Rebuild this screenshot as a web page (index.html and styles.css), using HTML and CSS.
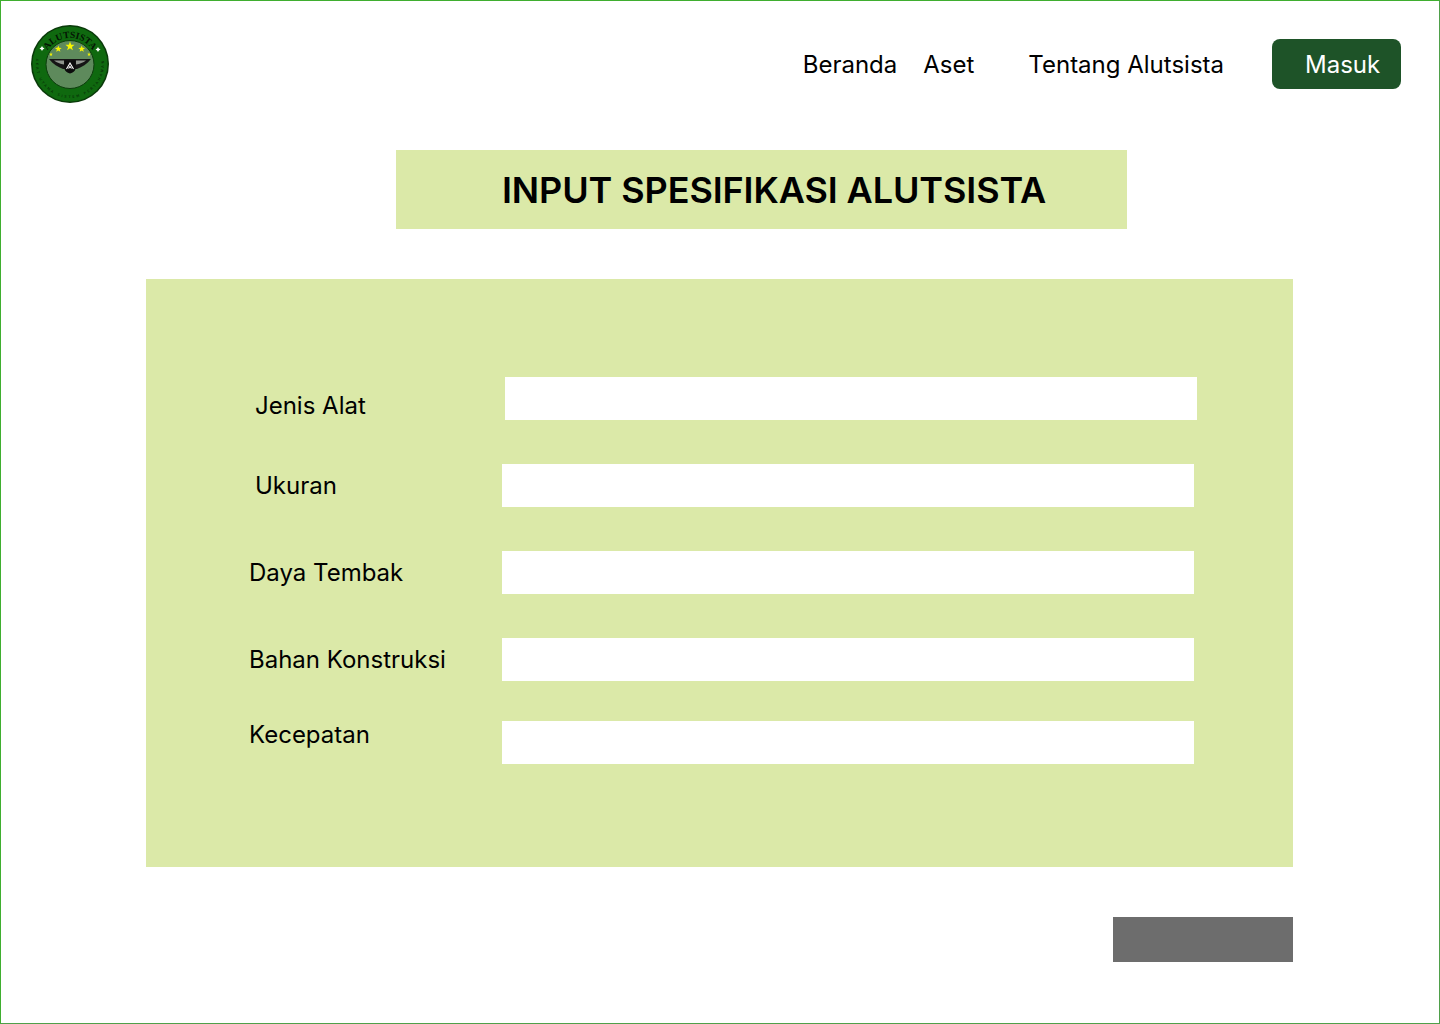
FILE: index.html
```html
<!doctype html>
<html>
    <head>
        <meta charset="utf-8">
        <meta name="viewport" content="width=device-width, initial-scale=1">
        <title>Input Spesifikasi Alutsista</title>
        <link rel="stylesheet" href="styles.css">
    </head>
    <body>
        <div class="page">
            <header class="header">
                <svg class="logo" viewBox="0 0 78 78" width="78" height="78">
                    <defs>
                        <path id="arcTop" d="M12.500 39.500 A26.500 26.500 0 0 1 65.500 39.500"></path>
                        <path id="arcBottom" d="M7 27.500 A34 34 0 1 0 71 27.500"></path>
                    </defs>
                    <circle cx="39" cy="39" r="39" fill="#0a3a0a"></circle>
                    <circle cx="39" cy="39" r="37.500" fill="#0f690f"></circle>
                    <circle cx="39" cy="39.500" r="24" fill="#5e8a5c" stroke="#0d3d0d" stroke-width="1"></circle>
                    <text class="logo-title"><textPath href="#arcTop" startOffset="50%" text-anchor="middle">ALUTSISTA</textPath></text>
                    <text class="logo-small"><textPath href="#arcBottom" startOffset="50%" text-anchor="middle">AKAT UTAMA SISTEM PERTAHANAN</textPath></text>
                    <path fill="#f6f500" d="M39 16.500l1.200 3.200 3.400.1-2.700 2.100 1 3.300-2.900-1.900-2.900 1.900 1-3.300-2.700-2.100 3.400-.1zM27.300 20.500l.9 2.300 2.500.1-2 1.500.7 2.400-2.100-1.400-2.100 1.400.7-2.400-2-1.500 2.500-.1zM50.700 20.500l.9 2.300 2.500.1-2 1.500.7 2.400-2.100-1.400-2.100 1.400.7-2.400-2-1.500 2.500-.1zM20 27.500l.5 1.200 1.300.1-1 .8.4 1.300-1.200-.7-1.200.7.4-1.300-1-.8 1.300-.1zM58 27.500l.5 1.200 1.300.1-1 .8.4 1.300-1.200-.7-1.200.7.4-1.300-1-.8 1.300-.1z"></path>
                    <path fill="#ffffff" d="M11 21l.9 1.600 1.600.9-1.600.9-.9 1.600-.9-1.600-1.600-.9 1.600-.9zM67 22l.9 1.600 1.600.9-1.600.9-.9 1.600-.9-1.600-1.600-.9 1.600-.9z"></path>
                    <path fill="#151515" d="M18 34 L60 34 C56 39 51 42 46 44 L32 44 C27 42 22 39 18 34z"></path>
                    <path fill="#8f958d" d="M23 35.500 L33 35.500 L33 39.500 C29 39 26 37.500 23 35.500zM55 35.500 L45 35.500 L45 39.500 C49 39 52 37.500 55 35.500z"></path>
                    <path fill="#0c0c0c" d="M33.500 35.500 L44.500 35.500 L44.500 44 C44 46 42 47.500 39 48.500 C36 47.500 34 46 33.500 44z"></path>
                    <path fill="none" stroke="#ffffff" stroke-width="1.100" d="M35.500 44 L39 38 L42.500 44 M37.500 43.500 L39 41.500 L40.500 43.500"></path>
                </svg>
                <nav class="nav">
                    <a class="nav-link nav-beranda">Beranda</a>
                    <a class="nav-link nav-aset">Aset</a>
                    <a class="nav-link">Tentang Alutsista</a>
                    <a class="masuk">Masuk</a>
                </nav>
            </header>

            <h1 class="title">INPUT SPESIFIKASI ALUTSISTA</h1>

            <form class="panel">
                <div class="row row-first">
                    <label class="label label-jenis">Jenis Alat</label>
                    <input class="field" type="text">
                </div>
                <div class="row">
                    <label class="label label-ukuran">Ukuran</label>
                    <input class="field" type="text">
                </div>
                <div class="row">
                    <label class="label">Daya Tembak</label>
                    <input class="field" type="text">
                </div>
                <div class="row">
                    <label class="label">Bahan Konstruksi</label>
                    <input class="field" type="text">
                </div>
                <div class="row row-last">
                    <label class="label label-kecepatan">Kecepatan</label>
                    <input class="field" type="text">
                </div>
            </form>

            <div class="actions">
                <button class="save" type="button"></button>
            </div>
        </div>
    </body>
</html>
```

FILE: styles.css
```css
* {
    margin: 0;
    padding: 0;
    box-sizing: border-box;
}

body {
    background-color: #ffffff;
    font-family: "Inter", "Liberation Sans", sans-serif;
    color: #000000;
}

.page {
    width: 1440px;
    height: 1024px;
    border: 1px solid #4fa04a;
    border-top-color: #3fae2f;
    border-left-color: #3fae2f;
    overflow: hidden;
}

.header {
    display: flex;
    align-items: center;
    justify-content: space-between;
    height: 78px;
    margin-top: 24px;
    padding-left: 30px;
    padding-right: 38px;
}

.logo {
    display: block;
}

.logo-title {
    font-family: "Liberation Serif", serif;
    font-size: 9.500px;
    font-weight: 700;
    fill: #041404;
}

.logo-small {
    font-family: "DejaVu Sans", sans-serif;
    font-size: 3.500px;
    fill: #052205;
    letter-spacing: 2px;
}

.nav {
    display: flex;
    align-items: center;
}

.nav-link {
    font-size: 24px;
    line-height: 30px;
    padding-top: 2px;
    margin-right: 48px;
}

.nav-beranda {
    margin-right: 26px;
}

.nav-aset {
    margin-right: 54px;
}

.masuk {
    display: block;
    width: 129px;
    height: 50px;
    padding-left: 33px;
    border-radius: 8px;
    background-color: #1e5328;
    color: #ffffff;
    font-size: 24px;
    line-height: 52px;
}

.title {
    width: 731px;
    height: 79px;
    margin-top: 47px;
    margin-left: 395px;
    padding-left: 106px;
    background-color: #dbe9a8;
    font-size: 36px;
    font-weight: 600;
    letter-spacing: -0.1px;
    line-height: 81px;
    white-space: nowrap;
}

.panel {
    width: 1147px;
    height: 588px;
    margin-top: 50px;
    margin-left: 145px;
    padding-top: 98px;
    padding-left: 103px;
    background-color: #dbe9a8;
}

.row {
    display: grid;
    grid-template-columns: 253px 692px;
    align-items: center;
    height: 43px;
    margin-bottom: 44px;
}

.row-first {
    margin-left: 3px;
}

.row:nth-child(4) {
    margin-bottom: 40px;
}

.row-last {
    margin-bottom: 0;
}

.label {
    font-size: 24px;
    line-height: 30px;
}

.label-jenis {
    padding-left: 3px;
    line-height: 28px;
    padding-top: 15px;
}

.label-ukuran {
    padding-left: 6px;
}

.label-kecepatan {
    line-height: 28px;
    padding-bottom: 15px;
}

.field {
    display: block;
    width: 692px;
    height: 43px;
    border: none;
    background-color: #ffffff;
}

.actions {
    display: flex;
    justify-content: flex-end;
    width: 1147px;
    margin-top: 50px;
    margin-left: 145px;
}

.save {
    width: 180px;
    height: 45px;
    border: none;
    background-color: #6d6d6d;
}
```
